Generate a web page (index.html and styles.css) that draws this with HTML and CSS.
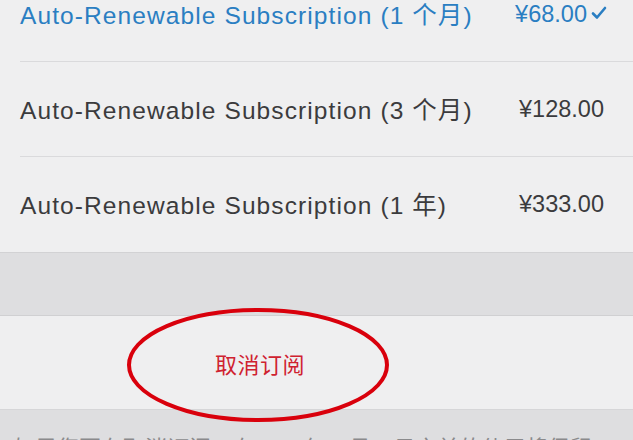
FILE: index.html
```html
<!DOCTYPE html>
<html lang="zh-CN">
<head>
    <meta charset="UTF-8">
    <meta name="viewport" content="width=device-width, initial-scale=1.0">
    <title>订阅</title>
    <link rel="stylesheet" href="styles.css">
</head>
<body>
    <div class="plans">
        <div class="plan selected">
            <span class="plan-name">Auto-Renewable Subscription (1 个月)</span>
            <span class="plan-price">¥68.00
                <svg class="check" width="16" height="14" viewBox="0 0 16 14">
                    <path d="M2 7.5 L6 11.5 L14 2" fill="none" stroke="currentColor" stroke-width="2.6" stroke-linecap="round" stroke-linejoin="round"/>
                </svg>
            </span>
        </div>
        <div class="plan">
            <span class="plan-name">Auto-Renewable Subscription (3 个月)</span>
            <span class="plan-price">¥128.00</span>
        </div>
        <div class="plan">
            <span class="plan-name">Auto-Renewable Subscription (1 年)</span>
            <span class="plan-price">¥333.00</span>
        </div>
    </div>

    <div class="spacer"></div>

    <div class="cancel">
        <span class="cancel-label">取消订阅</span>
        <svg class="mark" width="270" height="120" viewBox="0 0 270 120">
            <ellipse cx="135" cy="60" rx="129" ry="55" fill="none" stroke="#d9000c" stroke-width="4"/>
        </svg>
    </div>

    <p class="note">如果您要在取消订阅，在2015年11月11日之前的使用将保留</p>
</body>
</html>
```

FILE: styles.css
```css
* {
    box-sizing: border-box;
    margin: 0;
    padding: 0;
}

body {
    background-color: #dedee0;
    font-family: "Liberation Sans", "Noto Sans CJK SC", sans-serif;
    overflow: hidden;
}

.plans {
    margin-top: -33px;
    background: #efeff0;
    border-bottom: 1px solid #d2d2d4;
}

.plan {
    height: 95px;
    margin-left: 20px;
    padding-right: 29px;
    display: flex;
    align-items: center;
    justify-content: space-between;
    border-bottom: 1px solid #dadadc;
    font-size: 23.5px;
    color: #3b3b3d;
}

.plan:last-child {
    border-bottom: none;
}

.plan-name {
    font-size: 24.5px;
    letter-spacing: 1.1px;
    margin-top: -2px;
}

.plan.selected {
    color: #2a7ec2;
    padding-right: 26px;
}

.plan-price {
    display: flex;
    align-items: center;
}

.check {
    margin-left: 4px;
    margin-top: -2px;
}

.spacer {
    height: 63px;
    border-bottom: 1px solid #d0d0d2;
}

.cancel {
    position: relative;
    height: 94px;
    background: #efeff0;
    display: flex;
    align-items: center;
    padding-left: 215px;
    border-bottom: 1px solid #d6d6d8;
}

.cancel-label {
    font-size: 22px;
    color: #cf2230;
    letter-spacing: 0.5px;
}

.mark {
    position: absolute;
    left: 123px;
    top: -11px;
}

.note {
    padding: 20px 0 0 13px;
    font-size: 22px;
    color: #8a8a8c;
    white-space: nowrap;
}
```
